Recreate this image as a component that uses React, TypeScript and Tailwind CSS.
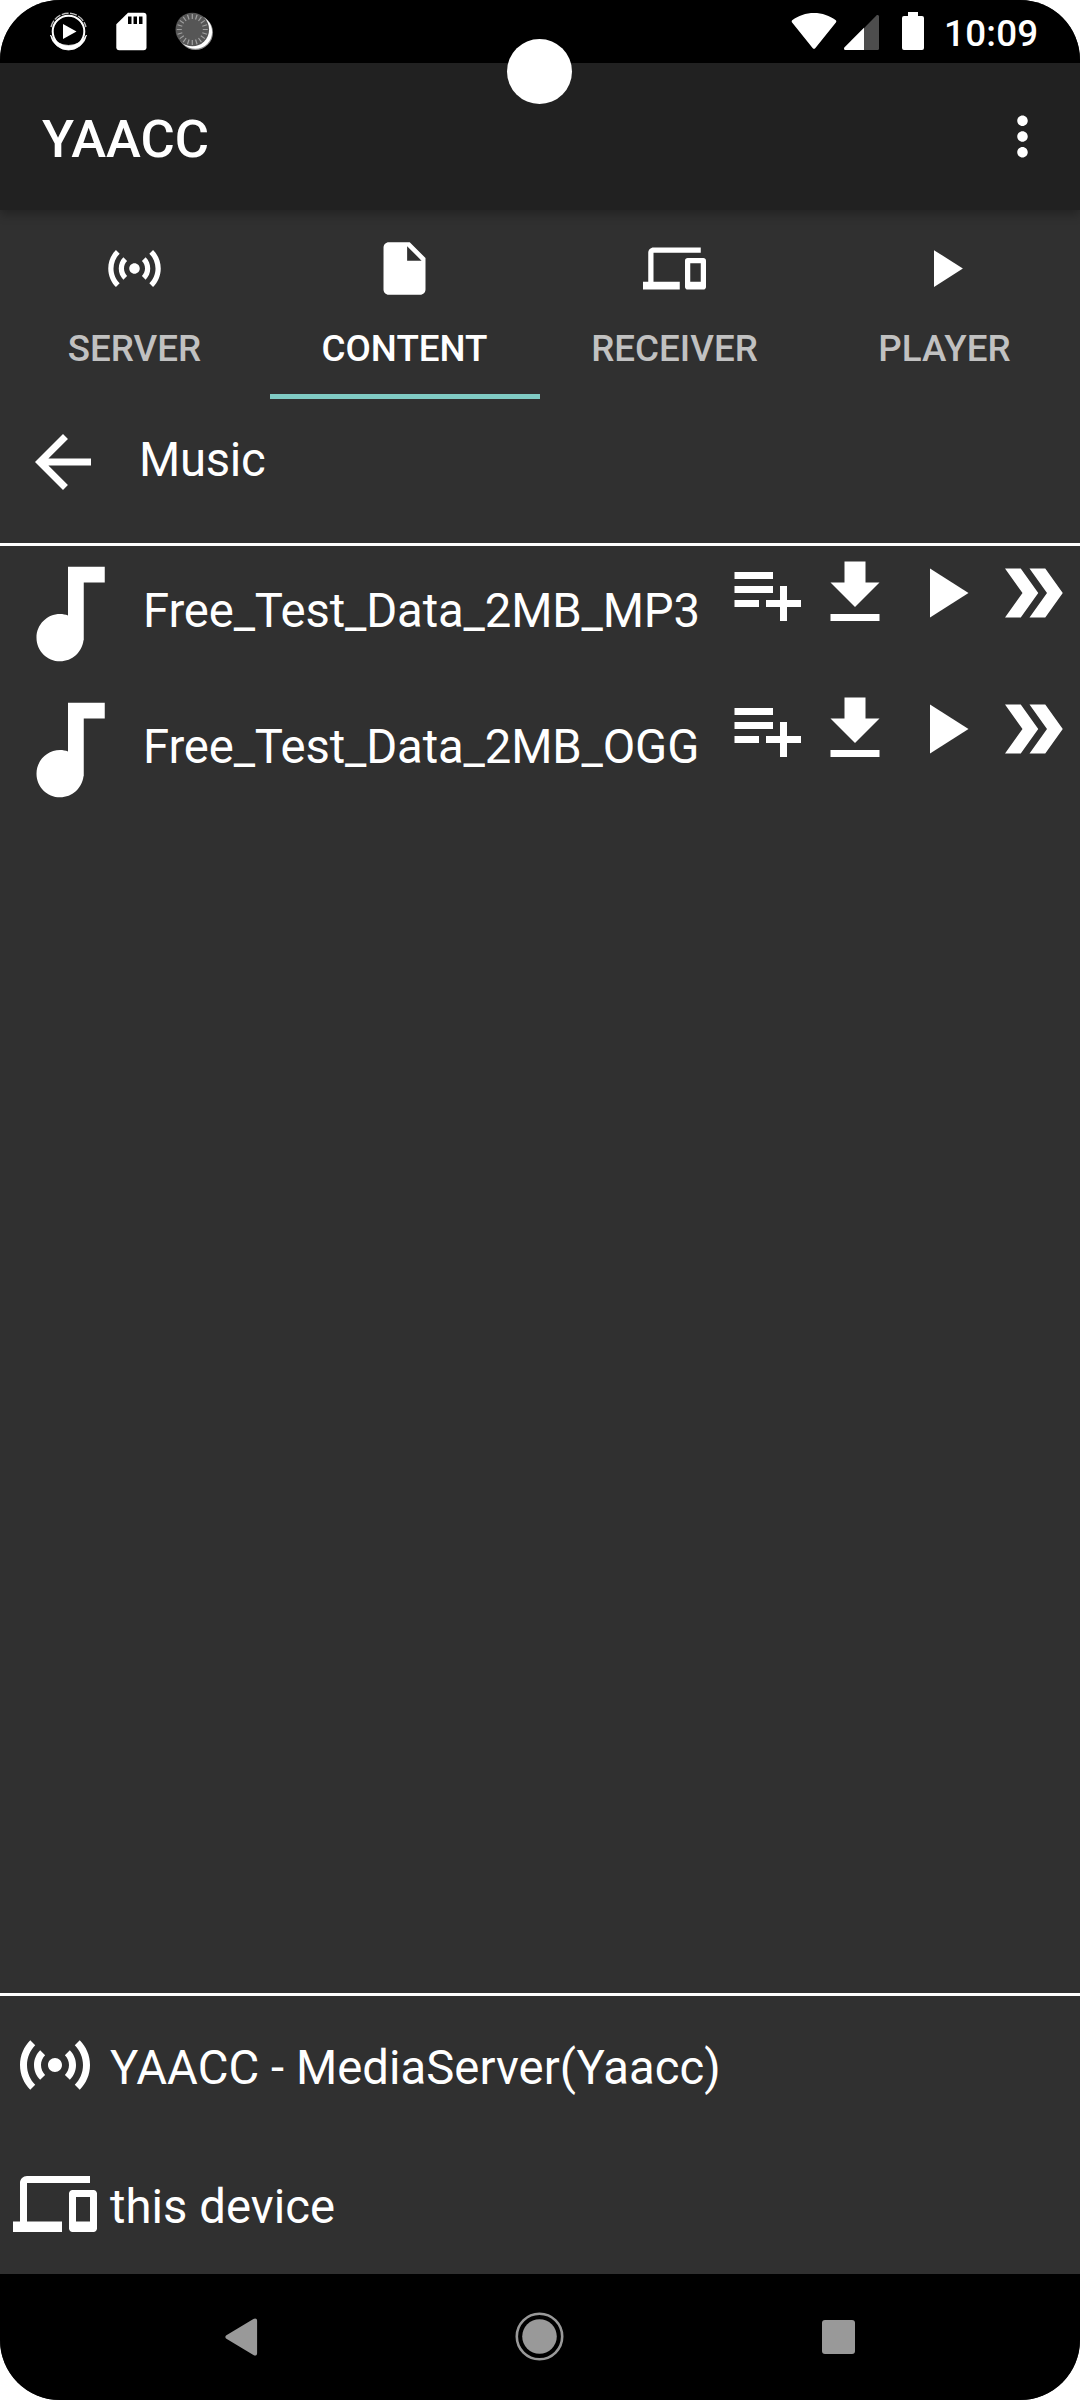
import type { ReactNode } from "react";

const PATHS = {
  sensors:
    "M7.76 16.24C6.67 15.16 6 13.66 6 12s.67-3.16 1.76-4.24l1.42 1.42C8.45 9.9 8 10.9 8 12c0 1.1.45 2.1 1.17 2.83l-1.41 1.41zm8.48 0C17.33 15.16 18 13.66 18 12s-.67-3.16-1.76-4.24l-1.42 1.42C15.55 9.9 16 10.9 16 12c0 1.1-.45 2.1-1.17 2.83l1.41 1.41zM12 10c-1.1 0-2 .9-2 2s.9 2 2 2 2-.9 2-2-.9-2-2-2zm8 2c0 2.21-.9 4.21-2.35 5.65l1.42 1.42C20.88 17.26 22 14.76 22 12s-1.12-5.26-2.93-7.07l-1.42 1.42C19.1 7.79 20 9.79 20 12zM6.35 6.35L4.93 4.93C3.12 6.74 2 9.24 2 12s1.12 5.26 2.93 7.07l1.42-1.42C4.9 16.21 4 14.21 4 12s.9-4.21 2.35-5.65z",
  file: "M6 2c-1.1 0-1.99.9-1.99 2L4 20c0 1.1.89 2 1.99 2H18c1.1 0 2-.9 2-2V8l-6-6H6zm7 7V3.5L18.5 9H13z",
  devices:
    "M4 6h18V4H4c-1.1 0-2 .9-2 2v11H0v3h14v-3H4V6zm19 2h-6c-.55 0-1 .45-1 1v10c0 .55.45 1 1 1h6c.55 0 1-.45 1-1V9c0-.55-.45-1-1-1zm-1 9h-4v-7h4v7z",
  play: "M8 5v14l11-7z",
  back: "M20 11H7.83l5.59-5.59L12 4l-8 8 8 8 1.41-1.41L7.83 13H20v-2z",
  note: "M12 3v9.28c-.47-.17-.97-.28-1.5-.28C8.01 12 6 14.01 6 16.5S8.01 21 10.5 21c2.31 0 4.2-1.75 4.45-4H15V6h4V3h-7z",
  playlistAdd:
    "M14 10H3v2h11v-2zm0-4H3v2h11V6zm4 8v-4h-2v4h-4v2h4v4h2v-4h4v-2h-4zM3 16h7v-2H3v2z",
  download: "M19 9h-4V3H9v6H5l7 7 7-7zM5 18v2h14v-2H5z",
  doubleArrow: "M15.5 5H11l5 7-5 7h4.5l5-7zM8.5 5H4l5 7-5 7h4.5l5-7z",
  more: "M12 8c1.1 0 2-.9 2-2s-.9-2-2-2-2 .9-2 2 .9 2 2 2zm0 2c-1.1 0-2 .9-2 2s.9 2 2 2 2-.9 2-2-.9-2-2-2zm0 6c-1.1 0-2 .9-2 2s.9 2 2 2 2-.9 2-2-.9-2-2-2z",
};

function Icon({ name, className }: { name: keyof typeof PATHS; className: string }) {
  return (
    <svg viewBox="0 0 24 24" fill="currentColor" className={`shrink-0 ${className}`}>
      <path d={PATHS[name]} />
    </svg>
  );
}

const TICKS = Array.from({ length: 20 }, (_, i) => i * 18);

function StatusBar() {
  return (
    <div className="flex h-[63px] shrink-0 items-start bg-black">
      <svg className="ml-12 mt-[10px] h-[42px] w-[42px]" viewBox="0 0 42 42" fill="none">
        <circle cx="20.5" cy="21.5" r="15.8" stroke="#fff" strokeWidth="2" />
        <path d="M2.5 25a18.3 18.3 0 0 0 36 0A19.5 17 0 0 1 2.500 25z" fill="#fff" stroke="#fff" strokeWidth=".8" />
        <path d="M3 17A18 18 0 0 1 38 17" stroke="#bbb" strokeWidth="1.4" strokeDasharray="7 1.5" />
        <path d="M15 14v15l13.500-7.500z" fill="#fff" />
      </svg>
      <svg className="ml-[26px] mt-[12px] h-[39px] w-[31px]" viewBox="0 0 31 39">
        <path
          fill="#fff"
          d="M12 .7h15.500a3 3 0 0 1 3 3v31.500a3 3 0 0 1-3 3H3.300a3 3 0 0 1-3-3V12.300z"
        />
        <path d="M12 4.500h3.500v7.500H12zM17.500 4.500H21v7.500h-3.500zM23 4.500h3.500v7.500H23z" fill="#000" />
      </svg>
      <svg className="ml-[28px] mt-[11px] h-[40px] w-[40px]" viewBox="0 0 40 40">
        <circle cx="20.500" cy="21.500" r="17.500" fill="#8a8a8a" />
        <circle cx="20.300" cy="21" r="16.800" fill="#fff" />
        <circle cx="17.300" cy="18.500" r="16.800" fill="#565656" />
        {TICKS.map((a) => (
          <path key={a} d="M17.300 3v5" stroke="#a0a0a0" strokeWidth="1.2" transform={`rotate(${a} 17.3 18.5)`} />
        ))}
      </svg>
      <div className="flex-1" />
      <svg className="mt-[12px] h-[38px] w-[46px]" viewBox="0 0 46 38" fill="#fff">
        <path d="M23 .9C31 .9 39 3.600 44.500 8c1 .8 1 1.700.400 2.500L24.200 36.200c-.7.8-1.700.8-2.400 0L1.100 10.500C.5 9.700.5 8.800 1.500 8 7 3.600 15 .9 23 .9z" />
      </svg>
      <svg className="ml-[7px] mt-[14px] h-[37px] w-[36px]" viewBox="0 0 36 37">
        <path d="M0 34.500L32.400 1.400c1-1 2.600-.4 2.600 1.100v32a1.500 1.500 0 0 1-1.500 1.500H1.200C0 36-.6 35.200 0 34.500z" fill="#4d4d4d" />
        <path d="M.300 33.600L20 13.800V36H1.200C0 36-.2 34.500.300 33.600z" fill="#fff" />
      </svg>
      <svg className="ml-[22px] mt-[12px] h-[38px] w-[22px]" viewBox="0 0 22 38" fill="#fff">
        <path d="M6 0h10v4h4a2 2 0 0 1 2 2v30a2 2 0 0 1-2 2H2a2 2 0 0 1-2-2V6a2 2 0 0 1 2-2h4z" />
      </svg>
      <div className="ml-5 mt-[9px] w-[136px] text-[36.750px] font-medium leading-[49px] tracking-[0.25px]">10:09</div>
    </div>
  );
}

function Tab({ icon, label, active = false }: { icon: keyof typeof PATHS; label: string; active?: boolean }) {
  return (
    <div
      className={`relative flex flex-1 flex-col items-center pt-[27px] ${active ? "text-white" : "text-[#c1c1c1]"}`}
    >
      <Icon name={icon} className="mr-px h-[63px] w-[63px] text-white" />
      <div className="mr-px mt-[25px] text-[36.750px] font-medium leading-[48px]">{label}</div>
      {active && <div className="absolute inset-x-0 bottom-0 h-[5px] bg-[#80cbc4]" />}
    </div>
  );
}

function Track({ title }: { title: string }) {
  return (
    <div className="flex h-[136px] items-start px-[5px] pt-[5px]">
      <Icon name="note" className="h-[126px] w-[126px]" />
      <div className="ml-[12px] mt-[32px] flex-1 whitespace-nowrap text-[47.250px] leading-[56px] tracking-[-0.14px]">
        {title}
      </div>
      <div className="flex gap-[5px]">
        <Icon name="playlistAdd" className="h-[84px] w-[84px]" />
        <Icon name="download" className="h-[84px] w-[84px]" />
        <Icon name="play" className="h-[84px] w-[84px]" />
        <Icon name="doubleArrow" className="h-[84px] w-[84px]" />
      </div>
    </div>
  );
}

function Device({ icon, children }: { icon: keyof typeof PATHS; children: ReactNode }) {
  return (
    <div className="flex h-[139px] items-start pl-[13px]">
      <Icon name={icon} className="h-[84px] w-[84px]" />
      <div className="ml-[13px] mt-[17px] text-[47.250px] leading-[56px] tracking-[0.04px]">{children}</div>
    </div>
  );
}

export default function App() {
  return (
    <div className="h-[2400px] w-[1080px] bg-white">
      <div className="relative flex h-full flex-col overflow-hidden rounded-[60px] bg-[#303030] font-['Roboto',sans-serif] text-white">
        <StatusBar />
        <div className="absolute left-[507px] top-[39px] z-20 h-[65px] w-[65px] rounded-full bg-white" />

        <header className="z-10 flex h-[147px] shrink-0 items-center justify-between bg-[#212121] pl-[42px] pr-[26px] shadow-[0_4px_10px_rgba(0,0,0,0.3)]">
          <h1 className="pt-[4px] text-[52.500px] font-medium leading-[60px]">YAACC</h1>
          <Icon name="more" className="h-[63px] w-[63px]" />
        </header>

        <nav className="flex h-[189px] shrink-0">
          <Tab icon="sensors" label="SERVER" />
          <Tab icon="file" label="CONTENT" active />
          <Tab icon="devices" label="RECEIVER" />
          <Tab icon="play" label="PLAYER" />
        </nav>

        <div className="flex h-[147px] shrink-0 items-start border-b-[3px] border-white pl-[21px] pt-[21px]">
          <Icon name="back" className="h-[84px] w-[84px]" />
          <div className="ml-[34px] mt-[12px] text-[47.250px] leading-[56px] tracking-[-0.3px]">Music</div>
        </div>

        <main className="flex-1">
          <Track title="Free_Test_Data_2MB_MP3" />
          <Track title="Free_Test_Data_2MB_OGG" />
        </main>

        <footer className="h-[281px] shrink-0 border-t-[3px] border-white pt-[27px]">
          <Device icon="sensors">YAACC - MediaServer(Yaacc)</Device>
          <Device icon="devices">this device</Device>
        </footer>

        <div className="flex h-[126px] shrink-0 items-center bg-black pl-[225px] text-[#999]">
          <svg className="h-[38px] w-[33px]" viewBox="0 0 33 38" fill="currentColor">
            <path d="M1.400 17.300L28.400 1c2-1.200 3.700-.3 3.700 1.800v32.400c0 2.100-1.700 3-3.700 1.800L1.400 20.700c-1.400-.9-1.400-2.500 0-3.400z" />
          </svg>
          <svg className="ml-[257px] h-[50px] w-[50px]" viewBox="0 0 50 50">
            <circle cx="24.500" cy="24.500" r="22.700" fill="none" stroke="currentColor" strokeWidth="2.600" />
            <circle cx="24.500" cy="24.500" r="17.300" fill="currentColor" />
          </svg>
          <div className="ml-[257px] h-[34px] w-[33px] rounded-[3px] bg-current" />
        </div>
      </div>
    </div>
  );
}
